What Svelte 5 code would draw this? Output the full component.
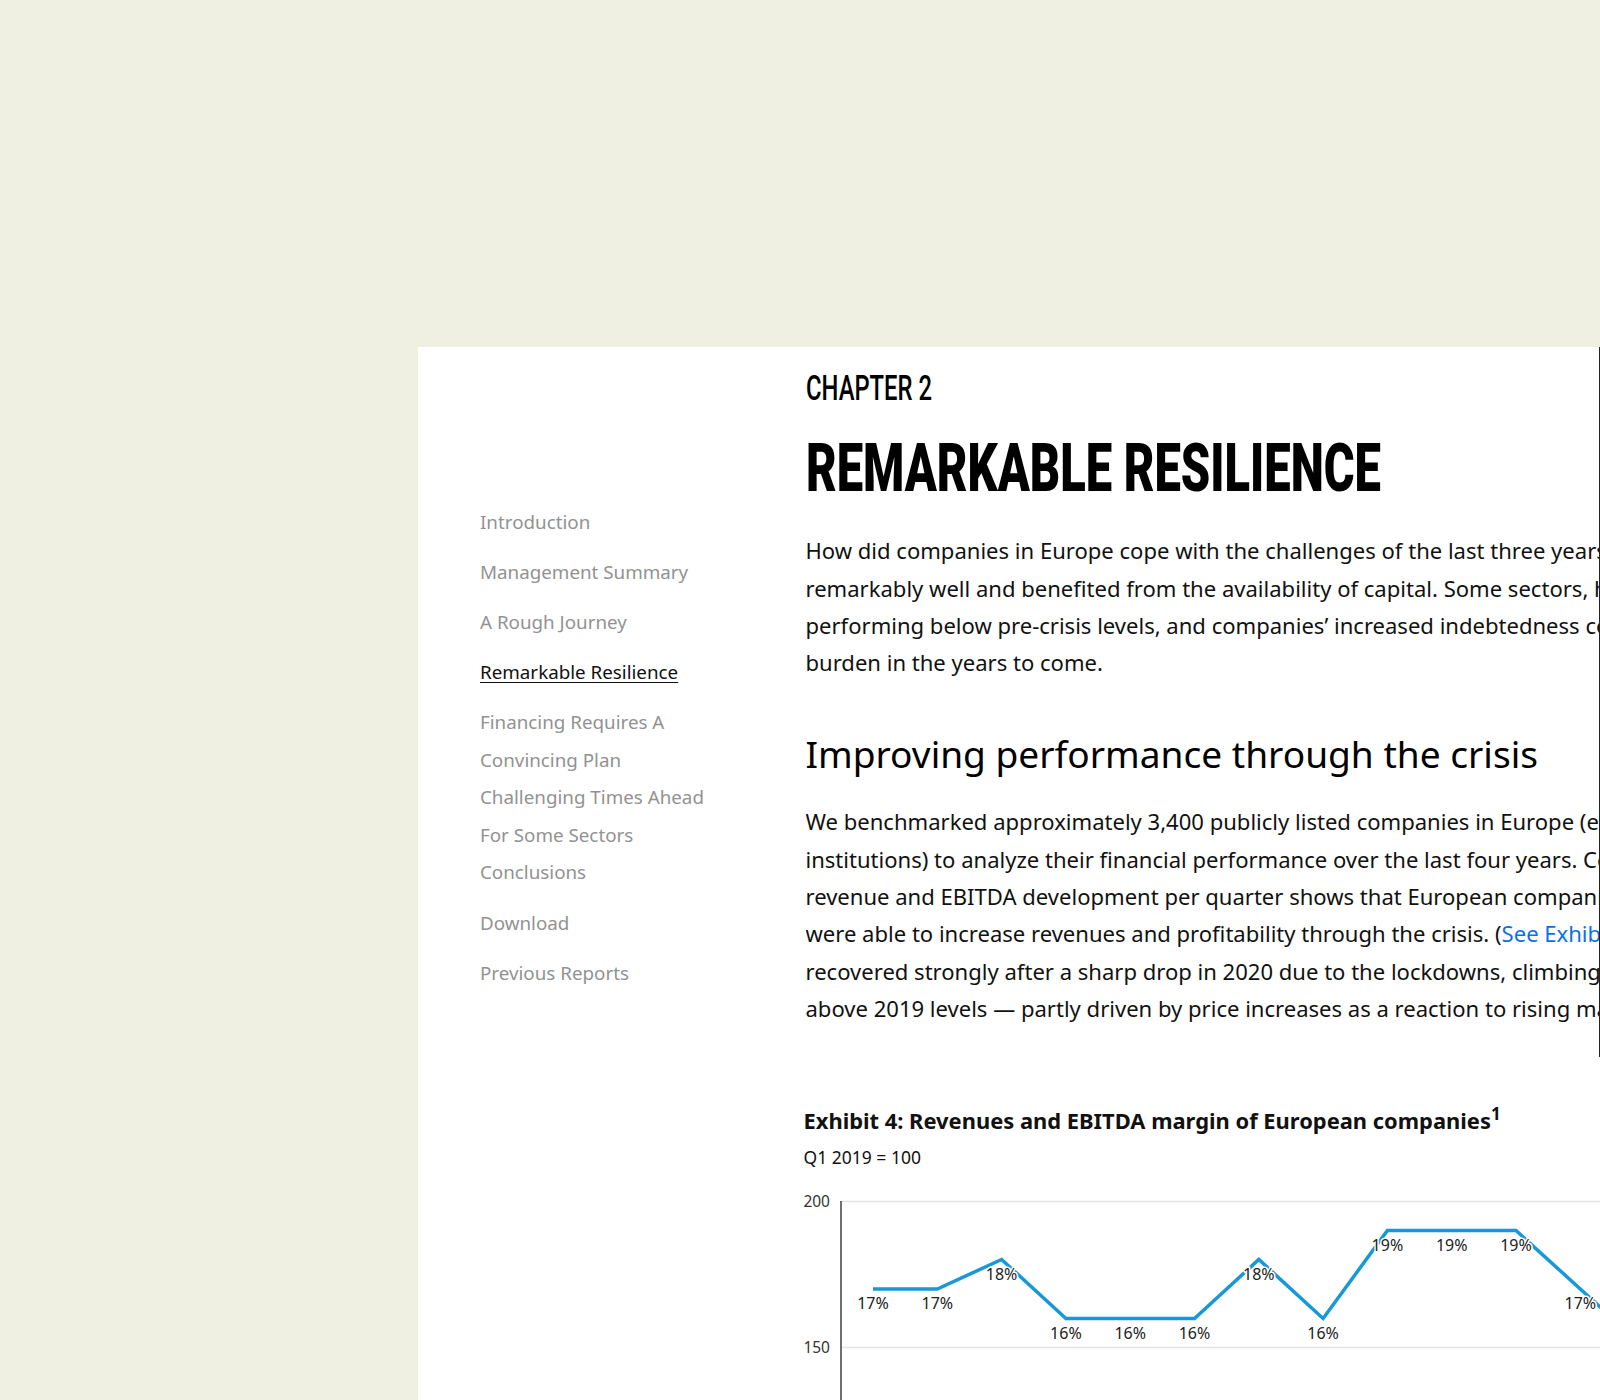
<script lang="ts">
  // sidebar chapters; tight = no gap before the next entry
  const nav = [
    { label: "Introduction" },
    { label: "Management Summary" },
    { label: "A Rough Journey" },
    { label: "Remarkable Resilience", active: true },
    { label: "Financing Requires A Convincing Plan", tight: true },
    { label: "Challenging Times Ahead For Some Sectors", tight: true },
    { label: "Conclusions" },
    { label: "Download" },
    { label: "Previous Reports" },
  ];

  // chart geometry, in page px relative to the svg box
  const X0 = 69;
  const STEP = 64.3;
  const LEVEL: Record<number, number> = { 15: 146, 16: 117.5, 17: 88, 18: 58.5, 19: 29.5 };
  const margins = [17, 17, 18, 16, 16, 16, 18, 16, 19, 19, 19, 17, 15];
  const points = margins.map((m, i) => ({ m, x: X0 + STEP * i, y: LEVEL[m] }));
  const linePath = points.map((p) => `${p.x.toFixed(1)},${p.y}`).join(" ");
</script>

<div class="page">
  <div class="panel">
    <nav class="side">
      {#each nav as item}
        <a href="#top" class="link" class:active={item.active} class:tight={item.tight}>{item.label}</a>
      {/each}
    </nav>

    <main class="main">
      <section class="text">
        <div class="chapter"><span>CHAPTER 2</span></div>
        <h1><span>REMARKABLE RESILIENCE</span></h1>
        <p>
          How did companies in Europe cope with the challenges of the last three years? Many did<br />
          remarkably well and benefited from the availability of capital. Some sectors, however, are still<br />
          performing below pre-crisis levels, and companies’ increased indebtedness could become a<br />
          burden in the years to come.
        </p>
        <h2>Improving performance through the crisis</h2>
        <p>
          We benchmarked approximately 3,400 publicly listed companies in Europe (excluding financial<br />
          institutions) to analyze their financial performance over the last four years. Comparing<br />
          revenue and EBITDA development per quarter shows that European companies<br />
          were able to increase revenues and profitability through the crisis. (<a href="#top">See Exhibit 4</a>) Revenues<br />
          recovered strongly after a sharp drop in 2020 due to the lockdowns, climbing well<br />
          above 2019 levels — partly driven by price increases as a reaction to rising market prices.
        </p>
      </section>

      <section class="exhibit">
        <h3>Exhibit 4: Revenues and EBITDA margin of European companies<sup>1</sup></h3>
        <div class="sub">Q1 2019 = 100</div>
        <svg class="chart" width="796" height="204" viewBox="0 0 796 204" role="img" aria-label="Revenues and EBITDA margin chart">
          <line x1="37" y1="0.5" x2="796" y2="0.5" class="grid" />
          <line x1="37" y1="146.5" x2="796" y2="146.5" class="grid" />
          <line x1="37" y1="0" x2="37" y2="204" class="axis" />
          <text x="26" y="5.5" class="tick">200</text>
          <text x="26" y="151.5" class="tick">150</text>
          <polyline points={linePath} class="series" />
          {#each points as p}
            <text x={p.x} y={p.y + 20.3} class="pct">{p.m}%</text>
          {/each}
        </svg>
      </section>
    </main>
  </div>
</div>

<style>
  :global(body) {
    margin: 0;
    background: #f0f0e2;
  }
  .page {
    width: 1600px;
    height: 1400px;
    padding: 347px 0 0 418px;
    box-sizing: border-box;
    overflow: hidden;
    font-family: "Noto Sans", sans-serif;
    color: #111;
  }
  .panel {
    display: grid;
    grid-template-columns: 387.5px 794.5px;
    width: 1182px;
    height: 1053px;
    background: #fff;
    overflow: hidden;
  }
  .side {
    display: flex;
    flex-direction: column;
    align-items: flex-start;
    width: 240px;
    padding: 157px 0 0 62px;
    gap: 12.5px;
    font-size: 18.8px;
    line-height: 37.5px;
  }
  .link {
    color: #929292;
    text-decoration: none;
  }
  .link.tight {
    margin-bottom: -12.5px;
  }
  .link:nth-child(7) {
    margin-bottom: 1px;
  }
  .link.active {
    color: #111;
    text-decoration: underline;
    text-underline-offset: 3px;
  }
  .main {
    min-width: 0;
  }
  .text {
    height: 710px;
    box-sizing: border-box;
    border-right: 1.5px solid #222;
    overflow: hidden;
    white-space: nowrap;
  }
  .chapter {
    font-family: Roboto, sans-serif;
    font-weight: 500;
    font-size: 35px;
    line-height: 44px;
    margin-top: 20px;
    color: #000;
  }
  .chapter span {
    display: inline-block;
    transform: scaleX(0.68);
    transform-origin: left;
  }
  h1 {
    font-family: Roboto, sans-serif;
    font-size: 66px;
    line-height: 72px;
    font-weight: 900;
    margin: 22px 0 0;
    color: #000;
  }
  h1 span {
    display: inline-block;
    transform: scaleX(0.7135);
    transform-origin: left;
  }
  p {
    font-size: 22.05px;
    line-height: 37.4px;
    margin: 27.2px 0 0;
  }
  p a {
    color: #0a70ea;
    text-decoration: none;
  }
  h2 {
    font-size: 37.1px;
    line-height: 52px;
    font-weight: 400;
    margin: 45.8px 0 0;
    color: #000;
  }
  h2 + p {
    margin-top: 23.5px;
  }
  .exhibit {
    margin-left: -2px;
    padding-top: 48.5px;
  }
  h3 {
    font-size: 21.9px;
    line-height: 30px;
    font-weight: 700;
    margin: 0;
  }
  sup {
    font-size: 17px;
    line-height: 0;
    vertical-align: 9px;
  }
  .sub {
    font-size: 17.5px;
    line-height: 26px;
    margin-top: 8.5px;
  }
  .chart {
    display: block;
    margin-top: 31px;
    overflow: visible;
  }
  .grid {
    stroke: #e4e4e4;
    stroke-width: 1.5;
  }
  .axis {
    stroke: #111;
    stroke-width: 1.2;
  }
  .tick {
    font-size: 15.5px;
    text-anchor: end;
    fill: #333;
  }
  .series {
    fill: none;
    stroke: #1798d8;
    stroke-width: 3.5;
  }
  .pct {
    font-size: 16px;
    text-anchor: middle;
    fill: #222;
    stroke: #fff;
    stroke-width: 3px;
    paint-order: stroke;
  }
</style>
